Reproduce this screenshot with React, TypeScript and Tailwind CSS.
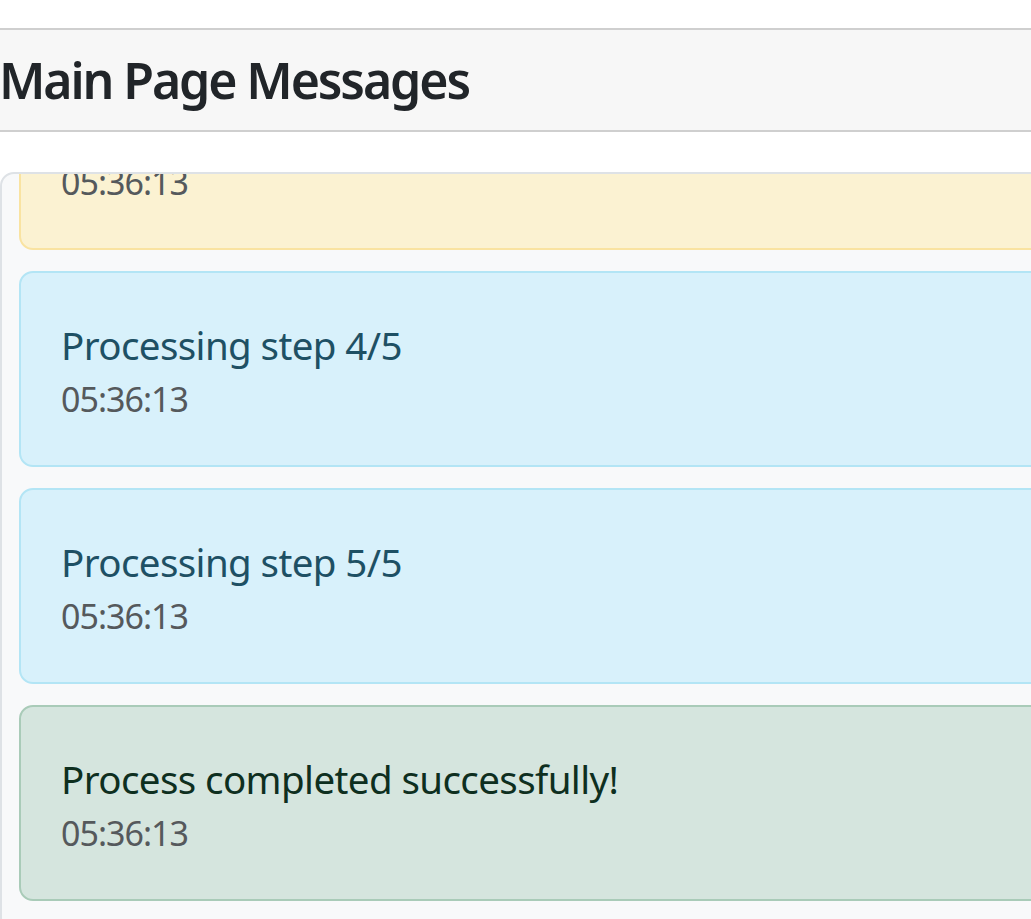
const messages = [
  { id: 3, text: "Processing step 3/5", time: "05:36:13", tone: "warning" },
  { id: 4, text: "Processing step 4/5", time: "05:36:13", tone: "info" },
  { id: 5, text: "Processing step 5/5", time: "05:36:13", tone: "info" },
  { id: 6, text: "Process completed successfully!", time: "05:36:13", tone: "success" },
]

const toneClass: Record<string, string> = {
  warning: "bg-[#fbf2d2] border-[#f9e3a1] text-[#5c4a12]",
  info: "bg-[#d8f1fb] border-[#b3e5f5] text-[#1e5064]",
  success: "bg-[#d5e5de] border-[#a9cbb8] text-[#0e2f1f]",
}

export default function App() {
  return (
    <div className="min-h-screen bg-white font-['Noto_Sans',sans-serif] overflow-hidden">
      <div className="h-[28px]" />

      {/* ── Header ── */}
      <div className="border-y-2 border-[#cfcfcf] bg-[#f7f7f7] h-[104px] flex items-center">
        <h2 className="-ml-[1px] text-[50px] font-semibold text-[#212529] leading-none tracking-[-2.1px]">
          Main Page Messages
        </h2>
      </div>

      {/* ── Messages list ── */}
      <div className="mt-[40px] w-[1100px] h-[760px] border-2 border-[#dee2e6] rounded-[14px] bg-[#f8f9fa] overflow-hidden">
        <div className="-mt-[120px] px-[17px] flex flex-col gap-[21px]">
          {messages.map((m) => (
            <div
              key={m.id}
              className={`h-[196px] border-2 rounded-[14px] px-[40px] pt-[7px] flex flex-col justify-center ${toneClass[m.tone]}`}
            >
              <p className="text-[38.5px] leading-[54px] tracking-[-0.6px]">{m.text}</p>
              <p className="text-[34px] leading-[55px] tracking-[-1px] text-[#55595c]">{m.time}</p>
            </div>
          ))}
        </div>
      </div>
    </div>
  )
}
